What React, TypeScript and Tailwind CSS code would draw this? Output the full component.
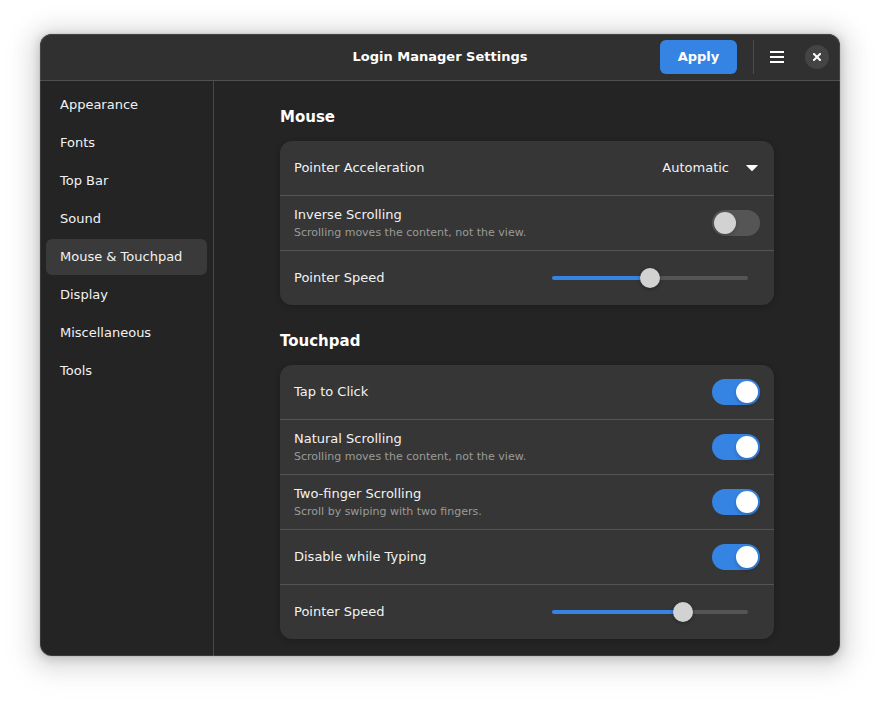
import { useId, useState, type CSSProperties, type ReactNode } from "react";

const pages = [
  "Appearance",
  "Fonts",
  "Top Bar",
  "Sound",
  "Mouse & Touchpad",
  "Display",
  "Miscellaneous",
  "Tools",
];

function Row({ id, title, subtitle, children }: { id: string; title: string; subtitle?: string; children: ReactNode }) {
  return (
    <div className="box-content flex h-[54px] items-center justify-between gap-4 px-[14px]">
      <div>
        <label htmlFor={id} className="block leading-5">
          {title}
        </label>
        {subtitle && (
          <p id={id + "-hint"} className="text-[11px] leading-4 text-[#9b9b9b]">
            {subtitle}
          </p>
        )}
      </div>
      {children}
    </div>
  );
}

function SwitchRow({ title, subtitle, initial }: { title: string; subtitle?: string; initial: boolean }) {
  const id = useId();
  const [on, setOn] = useState(initial);
  return (
    <Row id={id} title={title} subtitle={subtitle}>
      <input
        id={id}
        type="checkbox"
        role="switch"
        checked={on}
        aria-describedby={subtitle ? id + "-hint" : undefined}
        onChange={(e) => setOn(e.target.checked)}
        className="flex h-[26px] w-12 shrink-0 appearance-none items-center rounded-full bg-[#555555] p-0.5 before:size-[22px] before:rounded-full before:bg-[#d2d2d2] before:shadow-[0_2px_4px_rgba(0,0,0,0.2)] checked:justify-end checked:bg-[#3584e4] checked:before:bg-white"
      />
    </Row>
  );
}

function SliderRow({ title, initial }: { title: string; initial: number }) {
  const id = useId();
  const [value, setValue] = useState(initial);
  return (
    <Row id={id} title={title}>
      <input
        id={id}
        type="range"
        min={0}
        max={100}
        value={value}
        onChange={(e) => setValue(Number(e.target.value))}
        style={{ "--fill": value + "%" } as CSSProperties}
        className="mr-3 h-5 w-[196px] appearance-none bg-transparent [&::-webkit-slider-runnable-track]:h-1 [&::-webkit-slider-runnable-track]:rounded-full [&::-webkit-slider-runnable-track]:bg-[linear-gradient(to_right,#3584e4_var(--fill),#555555_var(--fill))] [&::-webkit-slider-thumb]:-mt-2 [&::-webkit-slider-thumb]:size-5 [&::-webkit-slider-thumb]:appearance-none [&::-webkit-slider-thumb]:rounded-full [&::-webkit-slider-thumb]:bg-[#d2d2d2] [&::-webkit-slider-thumb]:shadow-[0_1px_3px_1px_rgba(0,0,0,0.2)]"
      />
    </Row>
  );
}

function SelectRow({ title, options }: { title: string; options: string[] }) {
  const id = useId();
  return (
    <Row id={id} title={title}>
      <div className="grid items-center">
        <select
          id={id}
          className="col-start-1 row-start-1 h-[34px] appearance-none bg-transparent pr-[31px] text-right [text-align-last:right]"
        >
          {options.map((o) => (
            <option key={o}>{o}</option>
          ))}
        </select>
        <svg
          aria-hidden="true"
          viewBox="0 0 12 6"
          className="pointer-events-none col-start-1 row-start-1 mr-0.5 h-[6px] w-3 justify-self-end fill-white"
        >
          <path d="M0.6 0h10.8q.8 0 .3.6L6.6 5.7q-.6.5-1.2 0L.3.6Q-.2 0 .6 0z" />
        </svg>
      </div>
    </Row>
  );
}

function Group({ title, children }: { title: string; children: ReactNode }) {
  return (
    <section>
      <h2 className="text-[15px] leading-5 font-bold text-white">{title}</h2>
      <div className="mt-[14px] divide-y divide-[#545454] rounded-xl bg-[#363636] shadow-[0_1px_3px_1px_rgba(0,0,0,0.1),0_2px_6px_2px_rgba(0,0,0,0.04)]">
        {children}
      </div>
    </section>
  );
}

export default function App() {
  const [page, setPage] = useState("Mouse & Touchpad");
  return (
    <div className="min-h-screen bg-white px-10 pt-[34px] pb-[46px] font-['DejaVu_Sans',sans-serif] text-[13px] text-[#f2f2f2]">
      <div className="relative rounded-xl bg-[#242424] shadow-[0_2px_8px_2px_rgba(0,0,0,0.13),0_3px_20px_10px_rgba(0,0,0,0.09),0_6px_32px_16px_rgba(0,0,0,0.04),0_0_0_1px_rgba(0,0,0,0.05)] after:pointer-events-none after:absolute after:inset-0 after:rounded-xl after:shadow-[inset_0_0_0_1px_rgba(255,255,255,0.1)]">
        <header className="grid h-[47px] grid-cols-[1fr_auto_1fr] items-center rounded-t-xl border-b border-[#505050] bg-[#303030]">
          <h1 className="col-start-2 font-bold text-white">Login Manager Settings</h1>
          <div className="flex items-center justify-end pr-[11px]">
            <button type="button" className="h-[34px] min-w-[77px] rounded-md bg-[#3584e4] px-4 font-bold text-white">
              Apply
            </button>
            <div className="ml-4 h-[34px] w-px bg-[#4c4c4c]" />
            <button type="button" aria-label="Main menu" className="ml-1.5 grid h-[34px] w-[34px] place-items-center">
              <svg aria-hidden="true" viewBox="0 0 14 12" className="h-3 w-[14px] fill-white">
                <path d="M0 0h14v2H0zM0 5h14v2H0zM0 10h14v2H0z" />
              </svg>
            </button>
            <button
              type="button"
              aria-label="Close"
              className="ml-[11px] grid size-6 place-items-center rounded-full bg-[#444444]"
            >
              <svg aria-hidden="true" viewBox="0 0 8 8" className="size-2 stroke-white" strokeWidth="2" strokeLinecap="square">
                <path d="M1 1l6 6M7 1L1 7" />
              </svg>
            </button>
          </div>
        </header>
        <div className="flex">
          <nav aria-label="Settings pages" className="w-[174px] shrink-0 border-r border-[#484848] p-1.5">
            <ul className="flex flex-col gap-0.5">
              {pages.map((p) => (
                <li key={p}>
                  <button
                    type="button"
                    aria-current={p === page ? "page" : undefined}
                    onClick={() => setPage(p)}
                    className="h-9 w-full rounded-md px-[14px] text-left whitespace-nowrap aria-[current=page]:bg-[#3a3a3a]"
                  >
                    {p}
                  </button>
                </li>
              ))}
            </ul>
          </nav>
          <main className="flex flex-1 flex-col gap-[26px] px-[66px] pt-[26px] pb-[17px]">
            <Group title="Mouse">
              <SelectRow title="Pointer Acceleration" options={["Automatic", "Default", "Flat", "Adaptive"]} />
              <SwitchRow title="Inverse Scrolling" subtitle="Scrolling moves the content, not the view." initial={false} />
              <SliderRow title="Pointer Speed" initial={50} />
            </Group>
            <Group title="Touchpad">
              <SwitchRow title="Tap to Click" initial />
              <SwitchRow title="Natural Scrolling" subtitle="Scrolling moves the content, not the view." initial />
              <SwitchRow title="Two-finger Scrolling" subtitle="Scroll by swiping with two fingers." initial />
              <SwitchRow title="Disable while Typing" initial />
              <SliderRow title="Pointer Speed" initial={69} />
            </Group>
          </main>
        </div>
      </div>
    </div>
  );
}
